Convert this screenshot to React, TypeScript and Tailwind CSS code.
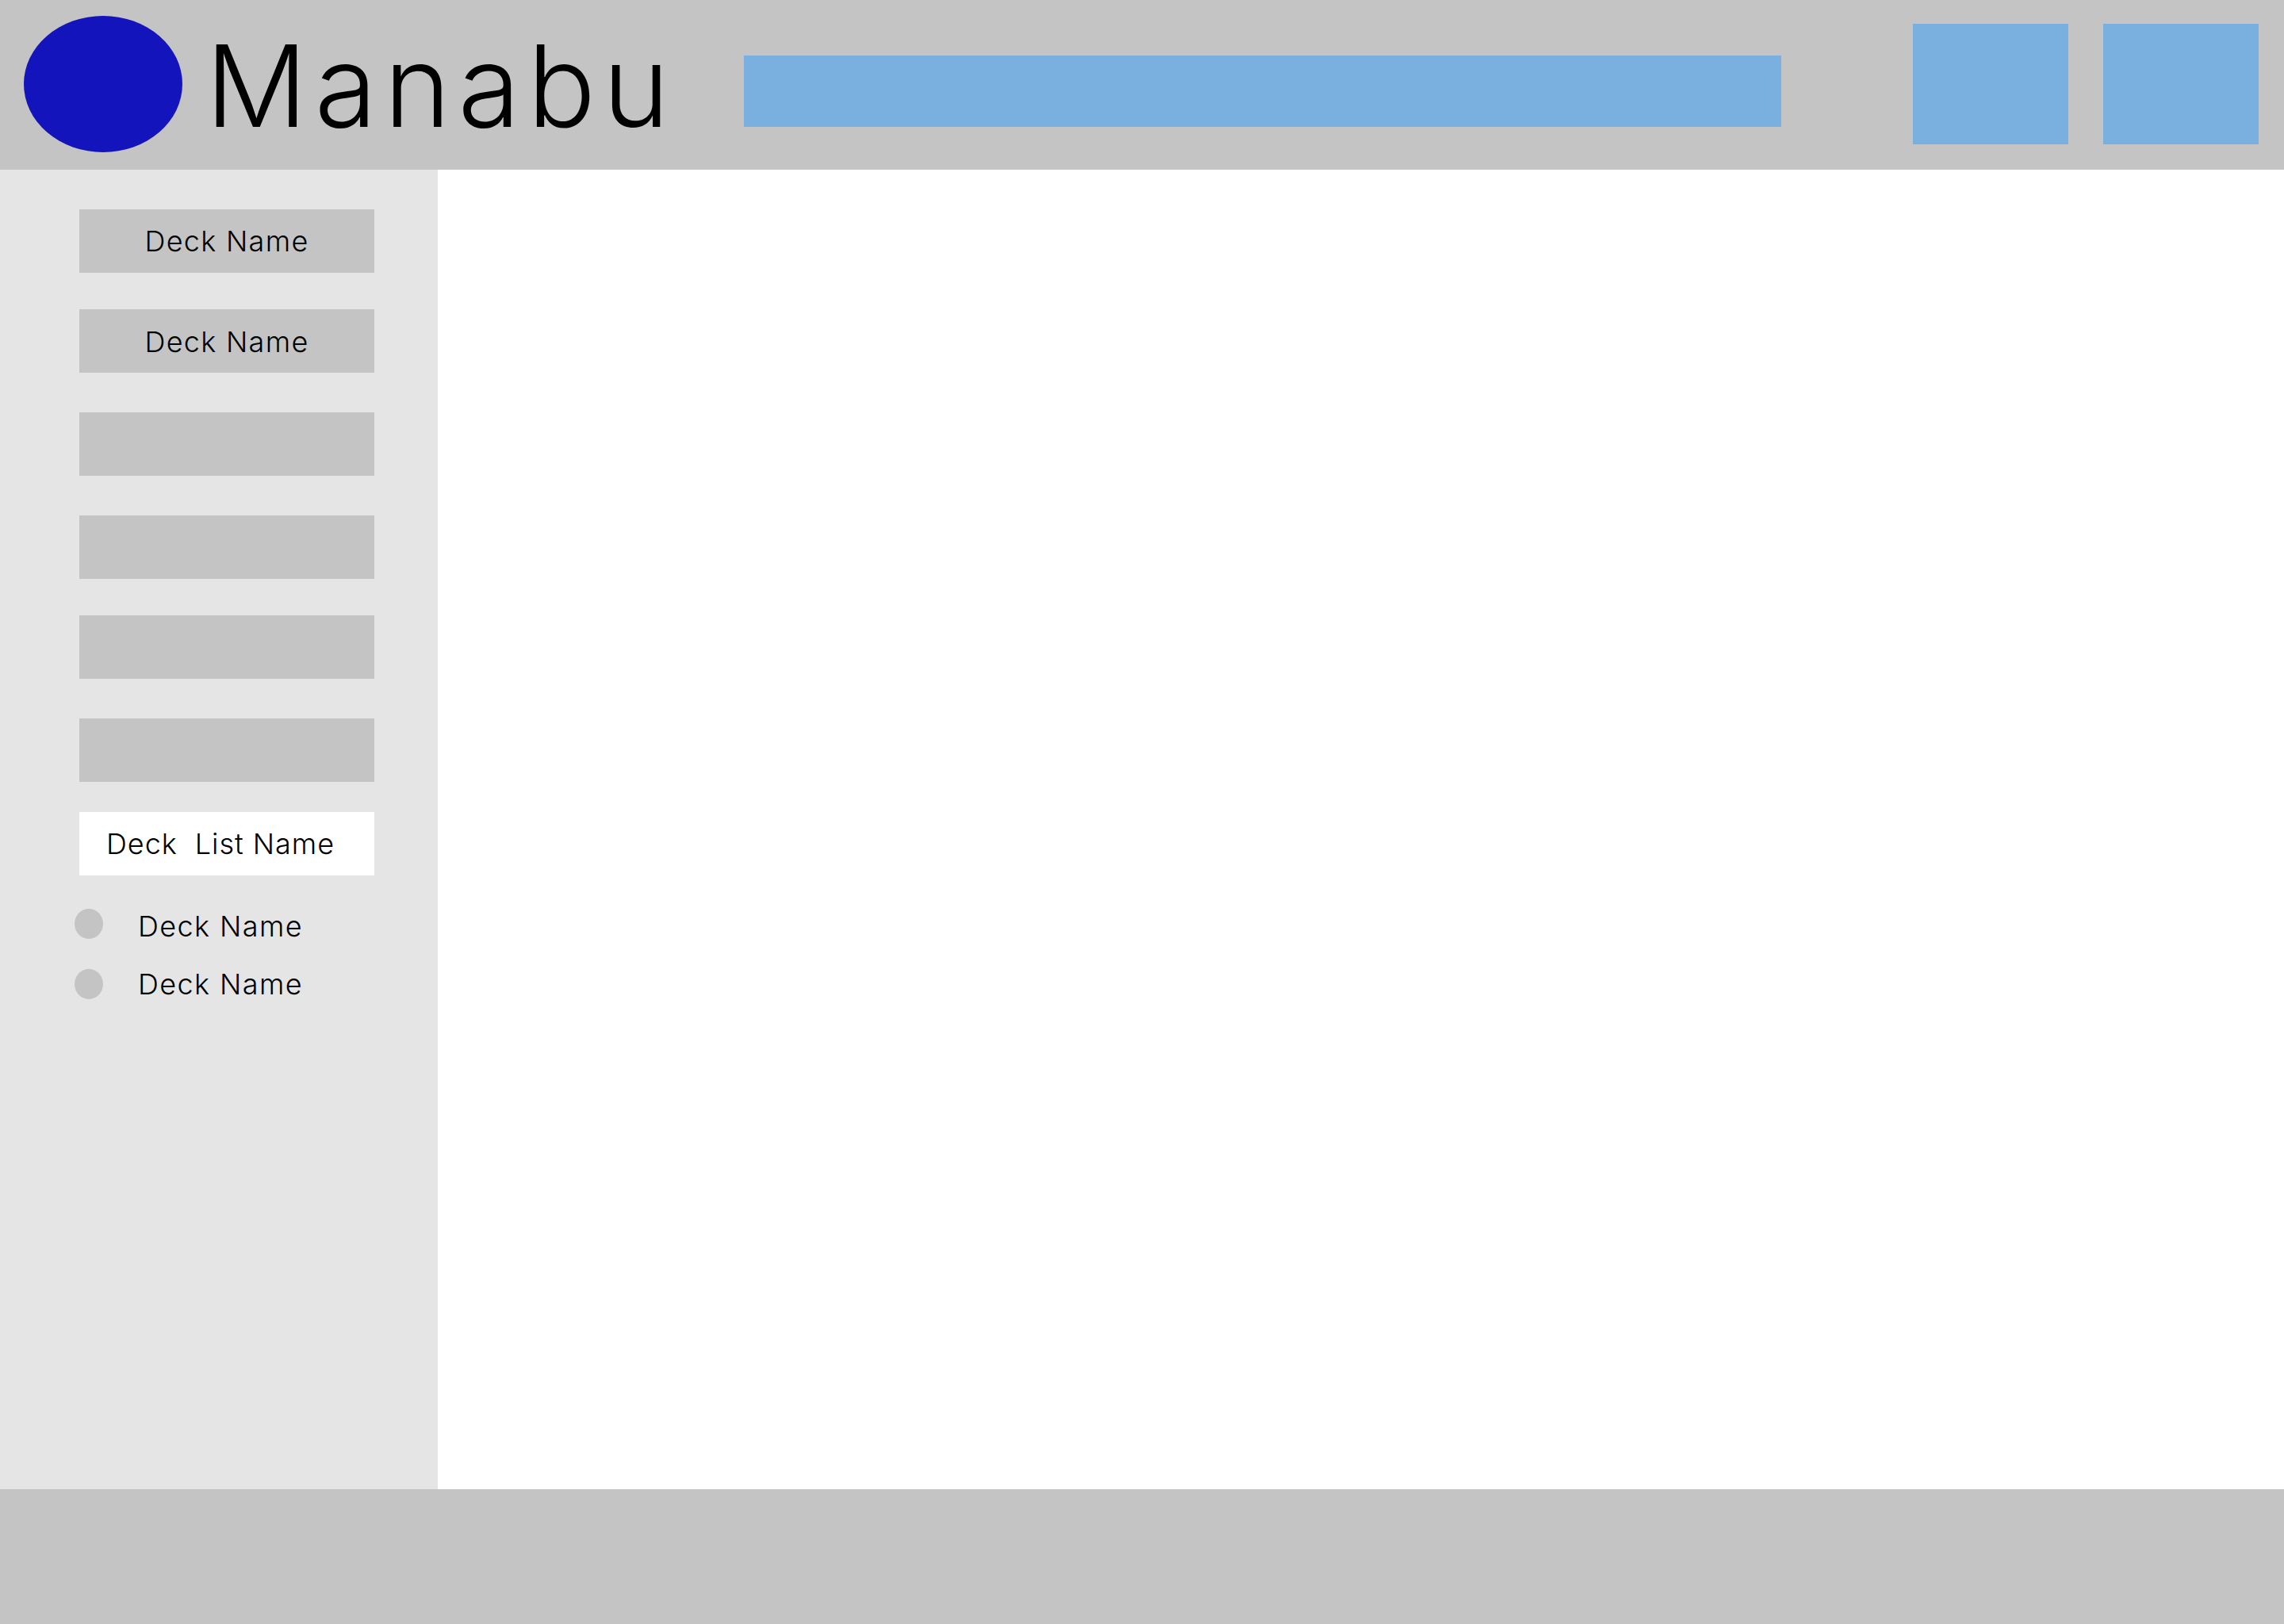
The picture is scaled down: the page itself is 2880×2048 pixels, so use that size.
const decks = [
  { name: "Deck Name", spacing: "mt-0" },
  { name: "Deck Name", spacing: "mt-[46px] pt-[2px]" },
  { name: "", spacing: "mt-[50px]" },
  { name: "", spacing: "mt-[50px]" },
  { name: "", spacing: "mt-[46px]" },
  { name: "", spacing: "mt-[50px]" },
];

const listItems = [
  { name: "Deck Name", offset: "mt-[5px]" },
  { name: "Deck Name", offset: "mt-0" },
];

const App = () => {
  return (
    <div className="flex flex-col h-[2048px] w-[2880px] bg-white text-black font-['Inter','Noto_Sans',sans-serif]">
      {/* Header */}
      <header className="flex items-start h-[214px] shrink-0 bg-[#c4c4c4] pl-[30px] pr-[32px]">
        <div className="w-[200px] h-[172px] mt-[20px] rounded-[50%] bg-[#1414bc] shrink-0" />
        <h1 className="ml-[29px] mt-[36px] w-[679px] text-[143px] leading-[143px] tracking-[9px] font-light">
          Manabu
        </h1>
        <div className="w-[1308px] h-[90px] mt-[70px] bg-[#7ab0df]" />
        <button className="ml-[166px] mt-[30px] w-[196px] h-[152px] bg-[#7ab0df]" />
        <button className="ml-[44px] mt-[30px] w-[196px] h-[152px] bg-[#7ab0df]" />
      </header>

      <div className="flex flex-1 min-h-0">
        {/* Sidebar */}
        <aside className="flex flex-col w-[552px] shrink-0 bg-[#e5e5e5] pt-[50px] pl-[100px]">
          {decks.map((deck, i) => (
            <div
              key={i}
              className={`flex items-center justify-center w-[372px] h-[80px] bg-[#c4c4c4] text-[36px] font-light tracking-[1.3px] ${deck.spacing}`}
            >
              {deck.name}
            </div>
          ))}
          <div className="flex items-center w-[372px] h-[80px] mt-[38px] pl-[34px] bg-white text-[36px] font-light tracking-[0.95px] whitespace-pre">
            Deck  List Name
          </div>
          <div className="flex flex-col gap-[38px] mt-[42px] -ml-[6px]">
            {listItems.map((item, i) => (
              <div key={i} className="flex items-center h-[38px]">
                <div className="w-[36px] h-[38px] rounded-[50%] bg-[#c4c4c4]" />
                <span className={`ml-[44px] text-[36px] font-light tracking-[1.4px] ${item.offset}`}>
                  {item.name}
                </span>
              </div>
            ))}
          </div>
        </aside>
        <main className="flex-1 bg-white" />
      </div>

      {/* Footer */}
      <footer className="h-[170px] shrink-0 bg-[#c4c4c4]" />
    </div>
  );
};

export default App;
